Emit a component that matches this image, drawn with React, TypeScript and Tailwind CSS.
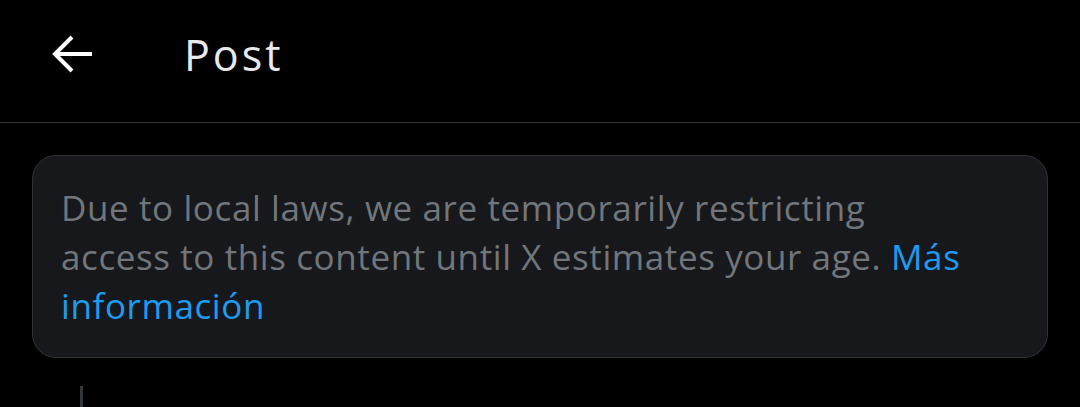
import React from "react"

const BackArrow = () => (
  <svg width="44" height="44" viewBox="0 0 44 44" fill="none" aria-hidden="true">
    <path d="M42 22H6" stroke="#ffffff" strokeWidth="4" />
    <path d="M22 5 5 22l17 17" stroke="#ffffff" strokeWidth="4" />
  </svg>
)

export default function App() {
  return (
    <div
      className="w-[1080px] h-[407px] overflow-hidden bg-black"
      style={{ fontFamily: "'Open Sans', 'Noto Sans', sans-serif" }}
    >
      <header className="h-[123px] pb-[14px] flex items-center border-b border-[#2f3336]">
        <button className="ml-[50px] w-[44px] h-[44px] flex items-center justify-center">
          <BackArrow />
        </button>
        <h1 className="ml-[90px] text-[43px] font-medium tracking-[3px] text-[#e7e9ea] leading-none">
          Post
        </h1>
      </header>

      <div className="mx-[32px] mt-[32px] rounded-[24px] border border-[#2f3336] bg-[#16181c] px-[28px] py-[27px]">
        <p className="text-[35px] leading-[49px] tracking-[0.6px] text-[#71767b] whitespace-nowrap">
          Due to local laws, we are temporarily restricting
          <br />
          access to this content until X estimates your age.{" "}
          <a href="#" className="text-[#1d9bf0]">
            Más
            <br />
            información
          </a>
        </p>
      </div>

      <div className="ml-[80px] mt-[28px] w-[3px] h-[30px] bg-[#333639]" />
    </div>
  )
}
